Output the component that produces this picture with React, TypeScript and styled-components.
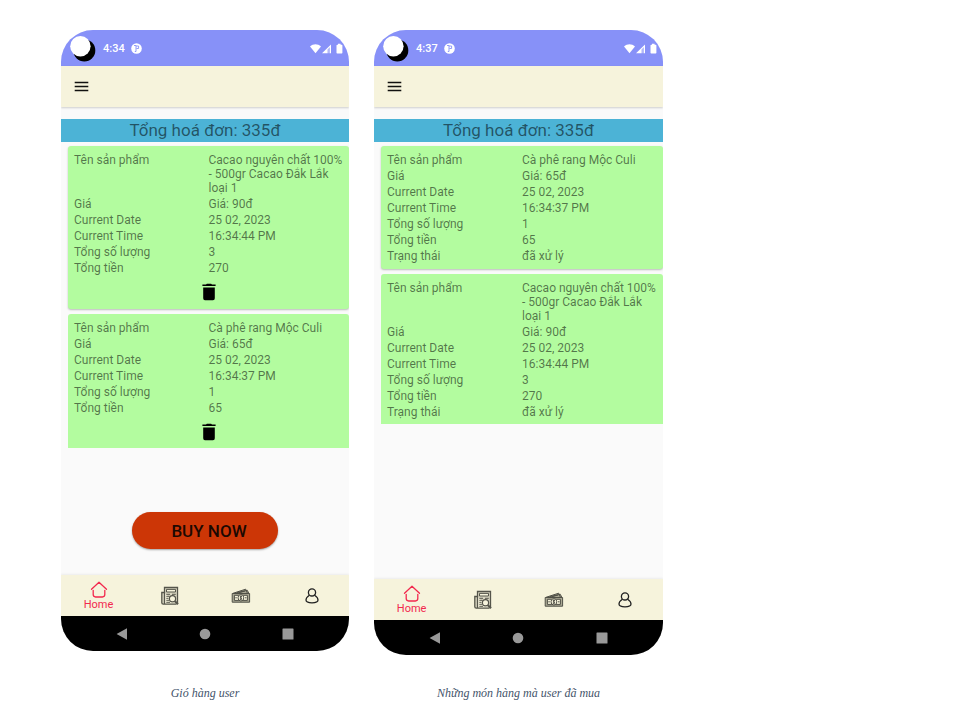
import React from "react";
import styled, { createGlobalStyle } from "styled-components";

const GlobalStyle = createGlobalStyle`
  *, *::before, *::after { box-sizing: border-box; }
  body { margin: 0; background: #fff; font-family: Roboto, "Noto Sans", sans-serif; }
  button { font-family: inherit; padding: 0; border: 0; background: none; cursor: pointer; }
`;

const Page = styled.main`
  display: grid;
  grid-template-columns: minmax(286px, 30vw) minmax(286px, calc(30vw + 1px));
  column-gap: 25px;
  padding: 30px 0 26px 61px;
`;

const Figure = styled.figure`
  display: flex;
  flex-direction: column;
  justify-content: space-between;
  margin: 0;
`;

const Caption = styled.figcaption`
  margin-top: 30px;
  text-align: center;
  font: italic 12px/16px "Liberation Serif", serif;
  color: #44546a;
`;

const Phone = styled.section<{ $minHeight: number }>`
  display: flex;
  flex-direction: column;
  min-height: ${(p) => p.$minHeight}px;
  border-radius: 32px;
  overflow: hidden;
  background: #fafafa;
`;

const StatusBar = styled.header`
  display: flex;
  align-items: center;
  height: 36px;
  padding: 1px 6px 0 9px;
  background: #8791f8;
  color: #fff;
  svg { display: block; }
`;

const Clock = styled.time`
  margin: 0 6px 0 7px;
  font-size: 11px;
  line-height: 14px;
  font-weight: 500;
`;

const Signals = styled.div`
  margin-left: auto;
`;

const AppBar = styled.div`
  display: flex;
  align-items: center;
  height: 41px;
  padding: 0 13px;
  background: #f6f3dc;
  box-shadow: 0 1px 2px rgba(0, 0, 0, 0.18);
  svg { display: block; }
`;

const Content = styled.div`
  flex: 1;
  display: flex;
  flex-direction: column;
  padding: 12px 0 26px;
`;

const Total = styled.h1`
  margin: 0;
  background: #4cb3d6;
  color: rgba(0, 0, 0, 0.54);
  text-align: center;
  font-size: 17px;
  line-height: 23px;
  font-weight: 400;
`;

const CardList = styled.div`
  display: flex;
  flex-direction: column;
  gap: 5px;
  margin: 4px 0 0 7px;
`;

const Card = styled.article`
  padding: 7px 6px 4px;
  border-radius: 3px;
  background: #b3fc9f;
  box-shadow: 0 1px 2px rgba(0, 0, 0, 0.25);
  &:last-child {
    padding-bottom: 3px;
    border-radius: 3px 3px 0 0;
    box-shadow: none;
  }
`;

const Details = styled.table`
  width: 100%;
  border-collapse: collapse;
  table-layout: fixed;
  font-size: 12px;
  line-height: 14px;
  color: rgba(0, 0, 0, 0.54);
  th, td {
    padding: 0 0 2px;
    width: 50%;
    text-align: left;
    vertical-align: top;
    font-weight: 400;
  }
`;

const DeleteButton = styled.button`
  display: block;
  margin: 0 auto;
  height: 28px;
  padding-top: 2px;
  svg { display: block; }
`;

const BuyButton = styled.button`
  align-self: center;
  margin-top: auto;
  width: 146px;
  height: 37px;
  padding-left: 8px;
  border-radius: 19px;
  background: #cc3606;
  box-shadow: 0 1px 2px rgba(0, 0, 0, 0.35);
  color: #1c0902;
  font-size: 17px;
  line-height: 20px;
  font-weight: 500;
`;

const TabBar = styled.nav`
  display: grid;
  grid-template-columns: repeat(4, 1fr);
  height: 41px;
  padding: 0 2px;
  background: #f6f3dc;
  box-shadow: 0 -1px 2px rgba(0, 0, 0, 0.06);
`;

const Tab = styled.button<{ $active?: boolean }>`
  display: flex;
  flex-direction: column;
  align-items: center;
  justify-content: center;
  color: ${(p) => (p.$active ? "#f2294e" : "#222")};
  font-size: 11px;
  line-height: 13px;
  svg { display: block; }
`;

const SystemBar = styled.footer`
  display: grid;
  grid-template-columns: repeat(3, 1fr);
  height: 35px;
  padding: 0 19px;
  background: #000;
`;

const SystemButton = styled.button`
  display: flex;
  align-items: center;
  justify-content: center;
`;

const CameraIcon = () => (
  <svg width="26" height="26" viewBox="0 0 26 26" aria-hidden="true">
    <circle cx="14.3" cy="14.4" r="11" fill="#000" />
    <circle cx="10.4" cy="10.3" r="10.2" fill="#fff" />
  </svg>
);

const NoticeIcon = () => (
  <svg width="11" height="11" viewBox="0 0 11 11" aria-hidden="true">
    <circle cx="5.5" cy="5.5" r="5.3" fill="#fff" />
    <path d="M3 2.5H5V8.5H3.8M5 3H7.6V5.5H5.4" fill="none" stroke="#8791f8" strokeWidth="0.9" />
  </svg>
);

const SignalIcons = () => (
  <svg width="33" height="12" viewBox="0 0 33 12" fill="#fff" aria-hidden="true">
    <path d="M0 3.4C3.3.4 7.7.4 11 3.4L5.5 10.2Z" />
    <path d="M12 10.3L21 1.4V10.3H19.8V4.3L17.6 6.4V10.3Z" />
    <path d="M17.6 6.4L19.8 4.3V10.3H17.6Z" fillOpacity="0.35" />
    <path d="M28 .8h2.6v1h1.1q.7 0 .7.7v7.3q0 .7-.7.7h-4.5q-.7 0-.7-.7V2.5q0-.7.7-.7H28Z" />
  </svg>
);

const MenuIcon = () => (
  <svg width="15" height="12" viewBox="0 0 15 12" aria-hidden="true">
    <path d="M.7 1.5H14.3M.7 5.5H14.3M.7 9.5H14.3" stroke="#11110f" strokeWidth="1.5" />
  </svg>
);

const TrashIcon = () => (
  <svg width="14" height="18" viewBox="0 0 14 18" aria-hidden="true">
    <path d="M1.2 4.4H12.8V15.3Q12.8 17.2 11 17.2H3Q1.2 17.2 1.2 15.3ZM.4 1.5H4L4.9.7H9.1L10 1.5H13.6V3.1H.4Z" fill="#000" />
  </svg>
);

const HomeIcon = () => (
  <svg width="18" height="17" viewBox="0 0 18 17" fill="none" stroke="currentColor" strokeWidth="1.3" strokeLinecap="round" strokeLinejoin="round" aria-hidden="true">
    <path d="M1.5 8.3L9 1.3L16.5 8.3M3.2 9.3V13.6Q3.2 16 5.6 16H12.4Q14.8 16 14.8 13.6V9.3" />
  </svg>
);

const OrdersIcon = () => (
  <svg width="18" height="20" viewBox="0 0 18 20" fill="none" stroke="#55554b" strokeWidth="1" aria-hidden="true">
    <path d="M3.5 18V1.5H16.5V17.5M3.5 6.5H.8V16.8Q.8 18.2 2.3 18.2H15.5" fill="#d9d6c1" strokeWidth="1.3" />
    <path d="M5.5 3.4H14.5V6H5.5Z" fill="#f6f3dc" />
    <path d="M5.3 8.3H9M11 8.3H14.8M5.3 10.3H8.5M5.3 12.3H7.5M5.3 14.3H8M5.3 16.3H9" />
    <circle cx="11.5" cy="12.8" r="3.1" fill="#f6f3dc" strokeWidth="1.2" />
    <path d="M13.7 15L17 18.2" strokeWidth="2" />
  </svg>
);

const CashIcon = () => (
  <svg width="20" height="16" viewBox="0 0 20 16" fill="none" stroke="#505047" strokeWidth="1" aria-hidden="true">
    <path d="M2 5.3L14.7 1.2L16.4 5.3M5.5 4.8L16.3 2.3L17.8 5.3M8 4.7L14 3" fill="#aaa894" />
    <path d="M1.2 5.5H18.6V14.2H1.2Z" fill="#aaa894" />
    <path d="M3.4 7.3H16.4V12.4H3.4Z" fill="#f6f3dc" />
    <ellipse cx="9.9" cy="9.8" rx="2.9" ry="3.2" fill="#f6f3dc" />
    <path d="M11 8.4H9.3Q8.7 9.1 9.7 9.7Q11.1 10.3 10.4 11.2H8.8M9.9 7.5V12.1M4.3 9.8H5.8M14 9.8H15.5" />
  </svg>
);

const UserIcon = () => (
  <svg width="14" height="16" viewBox="0 0 14 16" fill="none" stroke="currentColor" strokeWidth="1.3" aria-hidden="true">
    <circle cx="7" cy="4.4" r="3.6" />
    <path d="M4.4 7.2C2.2 8.6 1 10.5 1 12C1 14 3.7 14.8 7 14.8S13 14 13 12C13 10.5 11.8 8.6 9.6 7.2" />
  </svg>
);

type Row = [string, string];

const orderRows = (name: string, price: string, time: string, quantity: string, sum: string): Row[] => [
  ["Tên sản phẩm", name],
  ["Giá", `Giá: ${price}đ`],
  ["Current Date", "25 02, 2023"],
  ["Current Time", time],
  ["Tổng số lượng", quantity],
  ["Tổng tiền", sum],
];

const cacao = orderRows("Cacao nguyên chất 100% - 500gr Cacao Đắk Lắk loại 1", "90", "16:34:44 PM", "3", "270");
const coffee = orderRows("Cà phê rang Mộc Culi", "65", "16:34:37 PM", "1", "65");
const handled: Row = ["Trạng thái", "đã xử lý"];

const OrderCard = ({ rows, removable }: { rows: Row[]; removable?: boolean }) => (
  <Card>
    <Details>
      <tbody>
        {rows.map(([label, value]) => (
          <tr key={label}>
            <th scope="row">{label}</th>
            <td>{value}</td>
          </tr>
        ))}
      </tbody>
    </Details>
    {removable && (
      <DeleteButton type="button" aria-label="Xoá">
        <TrashIcon />
      </DeleteButton>
    )}
  </Card>
);

interface DeviceProps {
  time: string;
  minHeight: number;
  orders: Row[][];
  cart?: boolean;
}

const Device = ({ time, minHeight, orders, cart }: DeviceProps) => (
  <Phone $minHeight={minHeight}>
    <StatusBar>
      <CameraIcon />
      <Clock>{time}</Clock>
      <NoticeIcon />
      <Signals>
        <SignalIcons />
      </Signals>
    </StatusBar>
    <AppBar>
      <button type="button" aria-label="Menu">
        <MenuIcon />
      </button>
    </AppBar>
    <Content>
      <Total>Tổng hoá đơn: 335đ</Total>
      <CardList>
        {orders.map((rows) => (
          <OrderCard key={rows[0][1]} rows={rows} removable={cart} />
        ))}
      </CardList>
      {cart && <BuyButton type="button">BUY NOW</BuyButton>}
    </Content>
    <TabBar>
      <Tab type="button" $active>
        <HomeIcon />
        Home
      </Tab>
      <Tab type="button" aria-label="Orders">
        <OrdersIcon />
      </Tab>
      <Tab type="button" aria-label="Payments">
        <CashIcon />
      </Tab>
      <Tab type="button" aria-label="Account">
        <UserIcon />
      </Tab>
    </TabBar>
    <SystemBar>
      <SystemButton type="button" aria-label="Back">
        <svg width="12" height="12" viewBox="0 0 12 12"><path d="M.6 6L11 .3V11.7Z" fill="#999" /></svg>
      </SystemButton>
      <SystemButton type="button" aria-label="Home screen">
        <svg width="12" height="12" viewBox="0 0 12 12"><circle cx="6" cy="6" r="5.3" fill="#999" /></svg>
      </SystemButton>
      <SystemButton type="button" aria-label="Recent apps">
        <svg width="12" height="12" viewBox="0 0 12 12"><rect x=".5" y=".5" width="11" height="11" rx=".6" fill="#999" /></svg>
      </SystemButton>
    </SystemBar>
  </Phone>
);

export default function App() {
  return (
    <>
      <GlobalStyle />
      <Page>
        <Figure>
          <Device time="4:34" minHeight={621} orders={[cacao, coffee]} cart />
          <Caption>Gió hàng user</Caption>
        </Figure>
        <Figure>
          <Device time="4:37" minHeight={625} orders={[[...coffee, handled], [...cacao, handled]]} />
          <Caption>Những món hàng mà user đã mua</Caption>
        </Figure>
      </Page>
    </>
  );
}
